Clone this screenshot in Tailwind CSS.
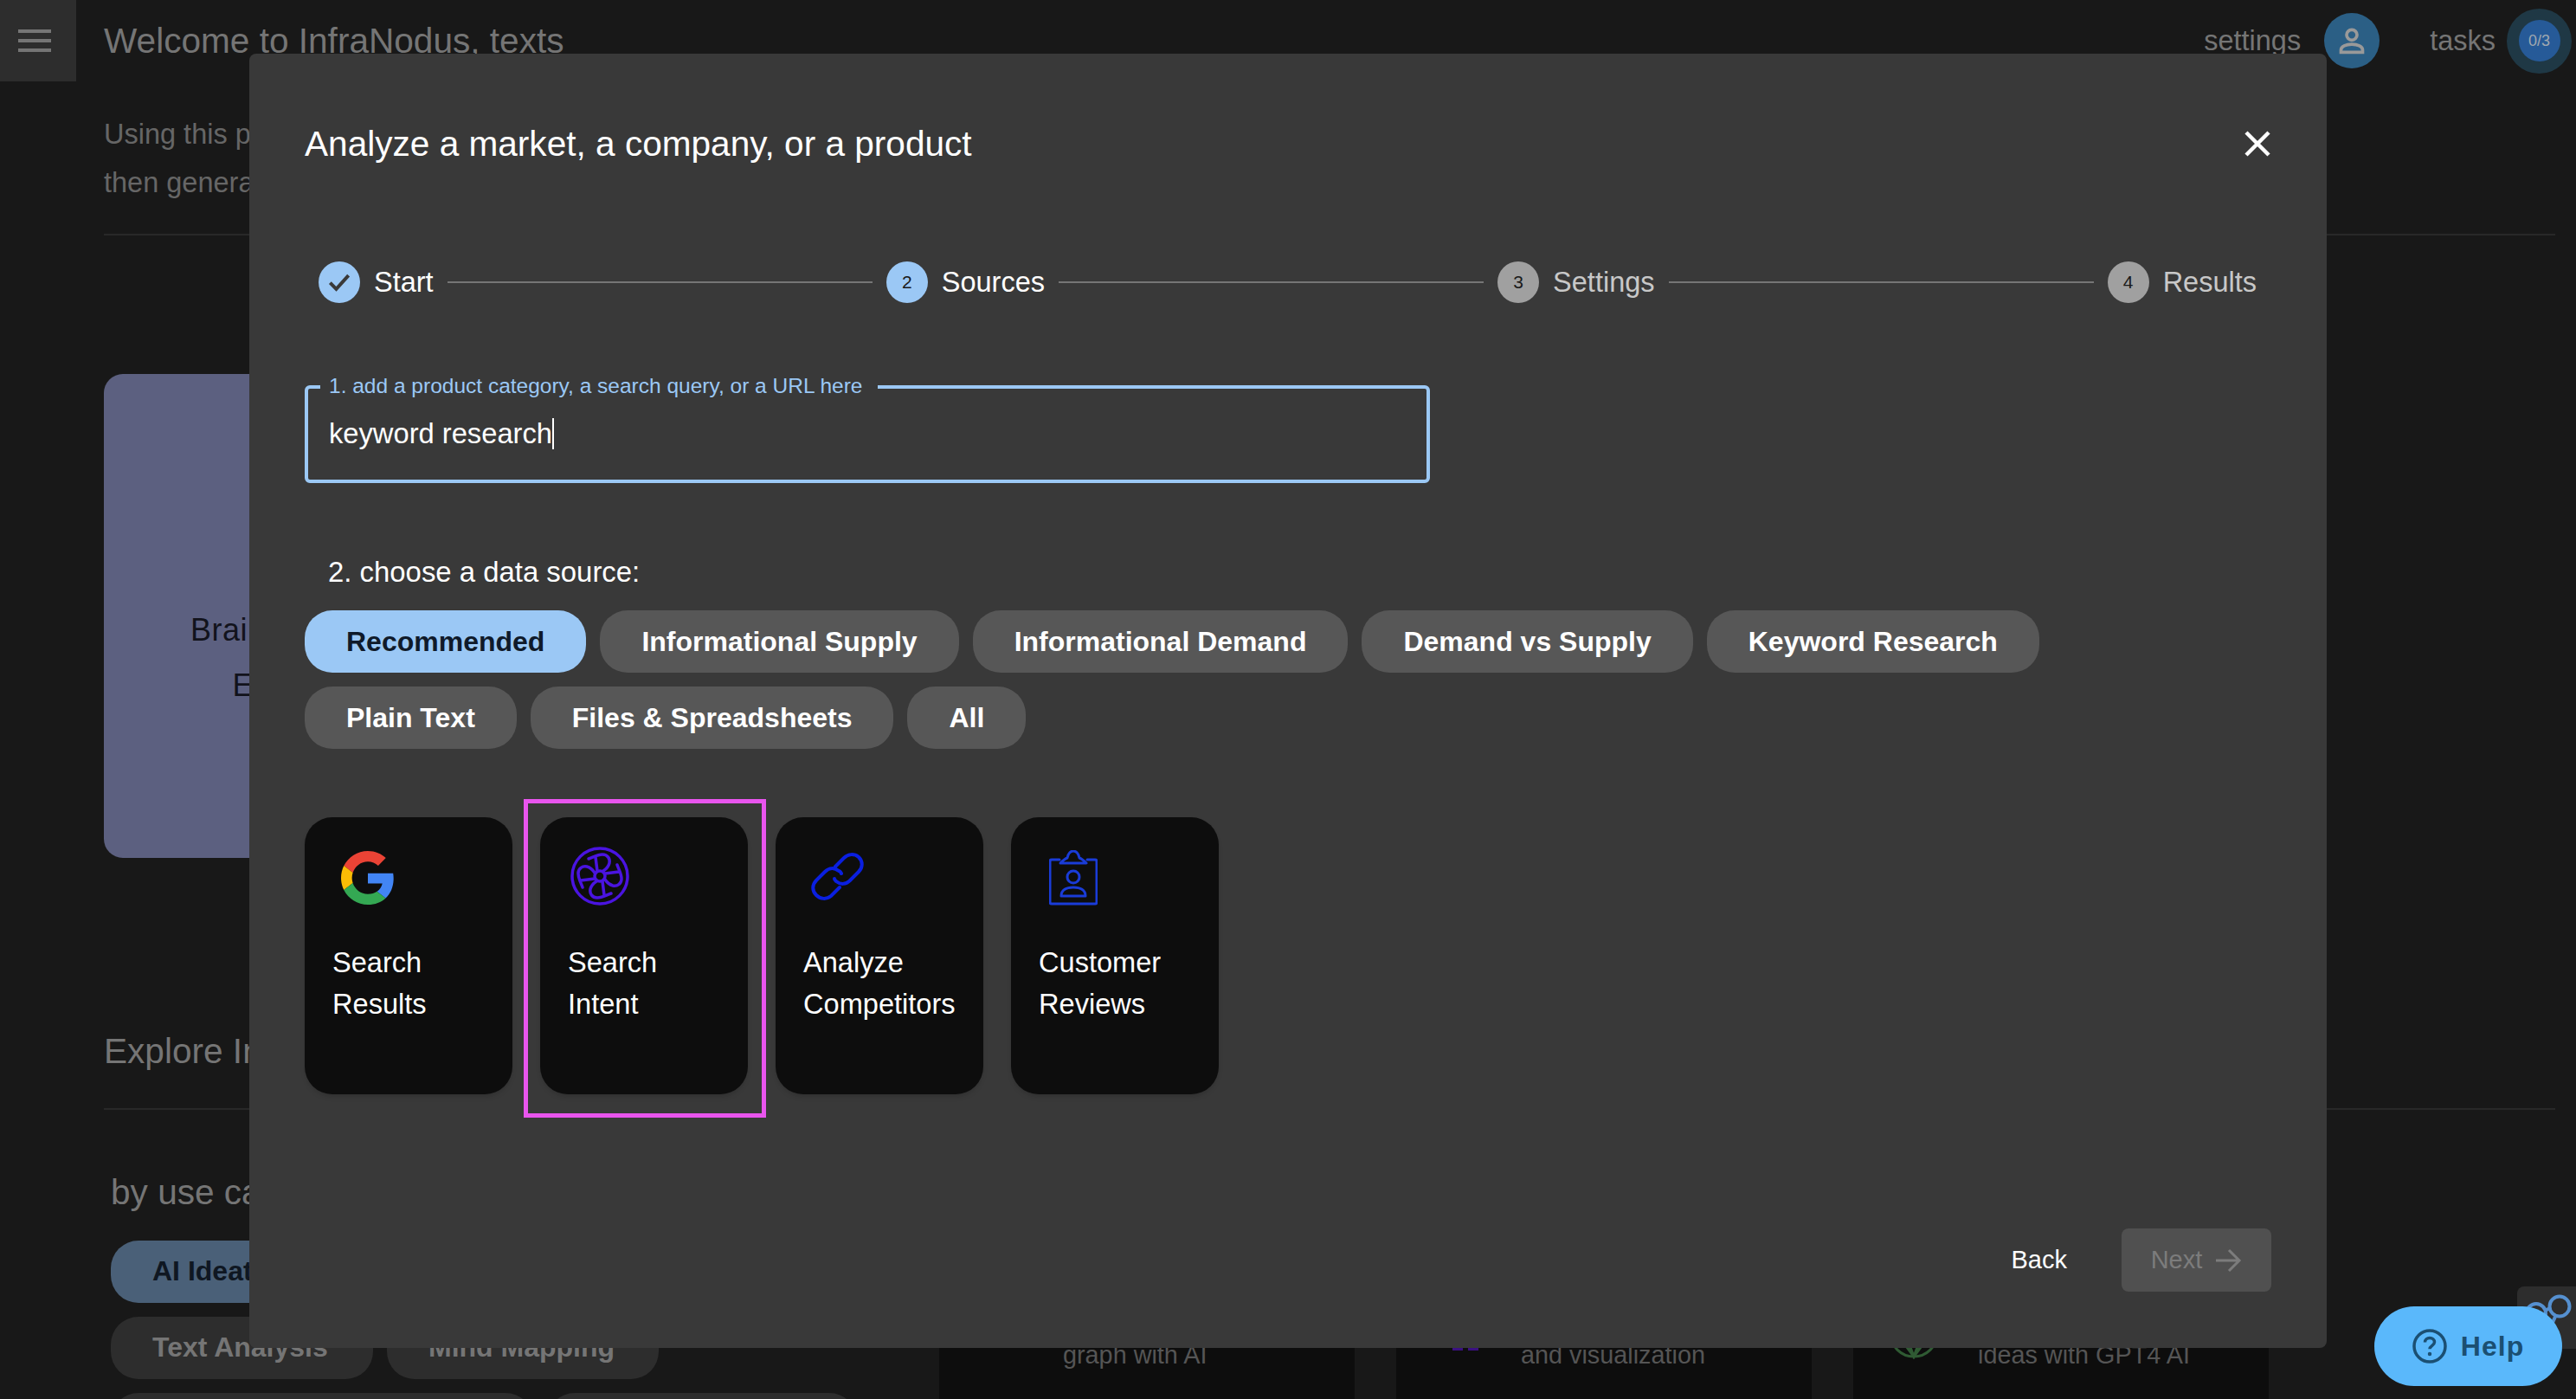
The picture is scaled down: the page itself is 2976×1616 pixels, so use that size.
<!DOCTYPE html>
<html lang="en">
<head>
    <meta charset="UTF-8">
    <title>InfraNodus</title>
    <script src="https://cdn.jsdelivr.net/npm/@tailwindcss/browser@4"></script>
</head>
<body class="bg-[#181818] font-['Liberation_Sans',Arial,sans-serif]">
<div class="relative w-[2976px] h-[1616px] overflow-hidden">

    <!-- page behind the dialog -->
    <header class="flex items-center h-[94px]">
        <div class="w-[88px] h-[94px] bg-[#2d2d2d] flex items-center pl-[20px]">
            <svg class="w-[40px] h-[40px]" viewBox="0 0 40 40" fill="#757575"><rect x="1" y="7" width="38" height="4"/><rect x="1" y="18" width="38" height="4"/><rect x="1" y="29" width="38" height="4"/></svg>
        </div>
        <h1 class="ml-[32px] text-[40.6px] text-[#757575]">Welcome to InfraNodus, texts</h1>
        <div class="ml-auto flex items-center">
            <span class="text-[32.5px] text-[#757575]">settings</span>
            <div class="ml-[27px] w-[64px] h-[64px] rounded-full bg-[#2b5f85] flex items-center justify-center">
                <svg class="w-[40px] h-[40px]" viewBox="0 0 24 24" fill="none" stroke="#999" stroke-width="2.2"><circle cx="12" cy="8" r="3.6"/><path d="M4.500 20v-1.500c0-2.500 3.500-4 7.500-4s7.500 1.500 7.500 4V20z"/></svg>
            </div>
            <span class="ml-[58px] text-[32.5px] text-[#757575]">tasks</span>
            <div class="ml-[13px] mr-[5px] w-[75px] h-[75px] rounded-full bg-[#1f3845] flex items-center justify-center">
                <div class="w-[48px] h-[48px] rounded-full bg-[#265a98] flex items-center justify-center text-[18px] text-[#a0a8b0]">0/3</div>
            </div>
        </div>
    </header>

    <main class="pl-[120px] pr-[24px]">
        <p class="mt-[33px] text-[32.5px] leading-[56px] text-[#666]">Using this p<br>then genera</p>
        <div class="mt-[31px] h-[2px] bg-[#282828]"></div>
        <div class="mt-[160px] w-[480px] h-[559px] rounded-[22px] bg-linear-to-r from-[#5c6080] from-75% to-[#4b5069] pt-[264px] text-[36px] tracking-[0.5px] leading-[64px] text-[#12131c] text-center">Brainstorm Ideas<br>Enrich Text</div>
        <h2 class="mt-[200px] text-[40.6px] leading-[46px] text-[#757575]">Explore InfraNodus</h2>
        <div class="mt-[43px] h-[2px] bg-[#282828]"></div>
        <h3 class="mt-[72px] ml-[8px] text-[40.6px] leading-[46px] text-[#757575]">by use case</h3>
    </main>

    <!-- chips and cards along the bottom of the page -->
    <div class="absolute left-[128px] top-[1433px] flex flex-col gap-[16px] text-[32px] font-bold">
        <div class="flex">
            <span class="h-[72px] rounded-[32px] bg-[#4a6078] px-[48px] leading-[70px] text-[#0f1722]">AI Ideation and Brainstorming</span>
        </div>
        <div class="flex gap-[16px]">
            <span class="h-[72px] w-[303px] rounded-[32px] bg-[#2d2d2d] pl-[48px] leading-[70px] text-[#757575]">Text Analysis</span>
            <span class="h-[72px] w-[314px] rounded-[32px] bg-[#2d2d2d] pl-[48px] leading-[70px] text-[#757575]">Mind Mapping</span>
        </div>
        <div class="flex gap-[16px]">
            <span class="h-[72px] w-[488px] rounded-[32px] bg-[#2d2d2d]"></span>
            <span class="h-[72px] w-[358px] rounded-[32px] bg-[#2d2d2d]"></span>
        </div>
    </div>
    <div class="absolute left-[1085px] top-[1400px] flex gap-[48px] text-[28.8px] text-[#555]">
        <div class="w-[480px] h-[240px] rounded-[24px] bg-[#0d0d0d] pt-[144px] pl-[143px]">graph with AI</div>
        <div class="relative w-[480px] h-[240px] rounded-[24px] bg-[#0d0d0d] pt-[144px] pl-[144px]">and visualization
            <svg class="absolute left-[63px] top-[140px] w-[34px] h-[20px]" viewBox="0 0 34 20" fill="#3a1080"><rect x="2" y="0" width="12" height="20"/><rect x="20" y="0" width="12" height="20"/></svg>
        </div>
        <div class="relative w-[480px] h-[240px] rounded-[24px] bg-[#0d0d0d] pt-[144px] pl-[144px]">ideas with GPT4 AI
            <svg class="absolute left-[40px] top-[110px] w-[60px] h-[60px]" viewBox="0 0 60 60" fill="none" stroke="#2f5a33" stroke-width="3"><circle cx="30" cy="30" r="27"/><path d="M10 30l20 27 20-27M20 30l10 27 10-27"/></svg>
        </div>
    </div>

    <!-- small graph button under the help pill -->
    <div class="absolute left-[2908px] top-[1486px] w-[68px] h-[72px] rounded-tl-[8px] bg-[#2d2d2d]">
        <svg class="w-[68px] h-[72px]" viewBox="0 0 68 72" fill="none" stroke="#5590d0" stroke-width="4"><circle cx="22" cy="31" r="11"/><circle cx="49" cy="23" r="11.500"/><path d="M32 28l6-3M44 35l-8 18"/></svg>
    </div>

    <!-- help pill -->
    <div class="absolute left-[2743px] top-[1509px] w-[217px] h-[92px] rounded-[46px] bg-[#5ab8fb] flex items-center justify-center gap-[16px] text-[#1b4f72]">
        <svg class="w-[40px] h-[40px]" viewBox="0 0 40 40" fill="none" stroke="currentColor" stroke-width="3.500"><circle cx="20" cy="20" r="18"/><path d="M14.500 15.500c0-3 2.500-5 5.500-5s5.500 2 5.500 4.800c0 4-5.500 4-5.500 8"/><circle cx="20" cy="29" r="1" stroke-width="2.500"/></svg>
        <span class="text-[32px] font-bold tracking-[1px]">Help</span>
    </div>

    <!-- dialog -->
    <div class="absolute left-[288px] top-[62px] w-[2400px] h-[1495px] rounded-[8px] bg-[#393939] text-white pl-[64px] pr-[64px]">
        <div class="flex items-center justify-between h-[210px] pb-[2px]">
            <h2 class="text-[40.6px]">Analyze a market, a company, or a product</h2>
            <svg class="w-[40px] h-[40px] mr-[-4px]" viewBox="0 0 40 40" stroke="#fff" stroke-width="4.500"><path d="M7 7l26 26M33 7L7 33"/></svg>
        </div>

        <!-- stepper -->
        <div class="flex items-center h-[48px] mt-[30px] pl-[16px] pr-[17px] text-[32.5px]">
            <span class="w-[48px] h-[48px] rounded-full bg-[#9bc8f5] flex items-center justify-center">
                <svg class="w-[34px] h-[34px]" viewBox="0 0 24 24" fill="none" stroke="#393939" stroke-width="2.800"><path d="M4.500 12.500l5 5L19.500 6.500"/></svg>
            </span>
            <span class="ml-[16px]">Start</span>
            <span class="flex-1 mx-[16px] h-[2px] bg-[#757575]"></span>
            <span class="w-[48px] h-[48px] rounded-full bg-[#9bc8f5] flex items-center justify-center text-[21px] text-[#1a1a1a]">2</span>
            <span class="ml-[16px]">Sources</span>
            <span class="flex-1 mx-[16px] h-[2px] bg-[#757575]"></span>
            <span class="w-[48px] h-[48px] rounded-full bg-[#a0a0a0] flex items-center justify-center text-[21px] text-[#1a1a1a]">3</span>
            <span class="ml-[16px] text-[#c8c8c8]">Settings</span>
            <span class="flex-1 mx-[16px] h-[2px] bg-[#757575]"></span>
            <span class="w-[48px] h-[48px] rounded-full bg-[#a0a0a0] flex items-center justify-center text-[21px] text-[#1a1a1a]">4</span>
            <span class="ml-[16px] text-[#c8c8c8]">Results</span>
        </div>

        <!-- input -->
        <div class="relative mt-[95px] w-[1300px] h-[113px] rounded-[6px] border-[4px] border-[#9bc8f5] flex items-center pl-[24px] pb-[2px] text-[32.7px]">
            <span class="absolute left-[14px] top-[-17px] h-[28px] pl-[10px] pr-[18px] bg-[#393939] text-[24.5px] leading-[28px] text-[#9bc8f5]">1. add a product category, a search query, or a URL here</span>
            <span>keyword research</span><span class="w-[2px] h-[36px] bg-white"></span>
        </div>

        <p class="mt-[80px] ml-[27px] text-[32.9px] leading-[46px]">2. choose a data source:</p>

        <!-- source filter chips -->
        <div class="mt-[21px] w-[2100px] flex flex-wrap gap-[16px] text-[32px] font-bold">
            <span class="h-[72px] rounded-[32px] px-[48px] leading-[72px] bg-[#9bc8f5] text-[#0f1a2a]">Recommended</span>
            <span class="h-[72px] rounded-[32px] px-[48px] leading-[72px] bg-[#575757]">Informational Supply</span>
            <span class="h-[72px] rounded-[32px] px-[48px] leading-[72px] bg-[#575757]">Informational Demand</span>
            <span class="h-[72px] rounded-[32px] px-[48px] leading-[72px] bg-[#575757]">Demand vs Supply</span>
            <span class="h-[72px] rounded-[32px] px-[48px] leading-[72px] bg-[#575757]">Keyword Research</span>
            <span class="h-[72px] rounded-[32px] px-[48px] leading-[72px] bg-[#575757]">Plain Text</span>
            <span class="h-[72px] rounded-[32px] px-[48px] leading-[72px] bg-[#575757]">Files &amp; Spreadsheets</span>
            <span class="h-[72px] rounded-[32px] px-[48px] leading-[72px] bg-[#575757]">All</span>
        </div>

        <!-- source cards -->
        <div class="mt-[79px] flex gap-[32px] text-[32.6px] leading-[48px]">
            <div class="w-[240px] h-[320px] rounded-[32px] bg-[#0d0d0d] pl-[32px] shadow-md">
                <svg class="mt-[38px] ml-[10px] w-[62px] h-[64px]" viewBox="0 0 48 48">
                    <path fill="#EA4335" d="M24 9.500c3.540 0 6.710 1.220 9.210 3.600l6.850-6.850C35.900 2.380 30.470 0 24 0 14.620 0 6.510 5.380 2.560 13.220l7.980 6.190C12.430 13.720 17.740 9.500 24 9.500z"/>
                    <path fill="#4285F4" d="M46.980 24.550c0-1.570-.15-3.090-.38-4.550H24v9.020h12.940c-.58 2.960-2.260 5.480-4.780 7.180l7.730 6c4.510-4.180 7.090-10.360 7.090-17.650z"/>
                    <path fill="#FBBC05" d="M10.530 28.590c-.48-1.450-.76-2.990-.76-4.590s.27-3.140.76-4.590l-7.980-6.190C.92 16.460 0 20.120 0 24c0 3.880.92 7.540 2.560 10.780l7.970-6.190z"/>
                    <path fill="#34A853" d="M24 48c6.480 0 11.930-2.130 15.890-5.810l-7.730-6c-2.150 1.450-4.920 2.300-8.160 2.300-6.260 0-11.570-4.220-13.470-9.910l-7.980 6.190C6.510 42.620 14.620 48 24 48z"/>
                </svg>
                <p class="mt-[42px]">Search<br>Results</p>
            </div>
            <div class="relative w-[240px] h-[320px] rounded-[32px] bg-[#0d0d0d] pl-[32px] shadow-md">
                <span class="absolute left-[-19px] top-[-21px] w-[280px] h-[368px] border-[5px] border-[#e955ee]"></span>
                <svg class="mt-[34px] ml-[3px] w-[68px] h-[68px]" viewBox="0 0 68 68" fill="none" stroke="#4a14e0" stroke-width="3.500" stroke-linecap="round">
                    <circle cx="34" cy="34" r="32"/>
                    <circle cx="34" cy="34" r="6"/>
                    <path d="M21 14c6-2 10-5 16-5s9 5 8 10c-1 4-4 7-7 9M29 12l2 16"/>
                    <path transform="rotate(90 34 34)" d="M21 14c6-2 10-5 16-5s9 5 8 10c-1 4-4 7-7 9M29 12l2 16"/>
                    <path transform="rotate(180 34 34)" d="M21 14c6-2 10-5 16-5s9 5 8 10c-1 4-4 7-7 9M29 12l2 16"/>
                    <path transform="rotate(270 34 34)" d="M21 14c6-2 10-5 16-5s9 5 8 10c-1 4-4 7-7 9M29 12l2 16"/>
                </svg>
                <p class="mt-[42px]">Search<br>Intent</p>
            </div>
            <div class="w-[240px] h-[320px] rounded-[32px] bg-[#0d0d0d] pl-[32px] shadow-md">
                <svg class="mt-[40px] ml-[9px] w-[62px] h-[62px]" viewBox="0 0 62 62" fill="none" stroke="#0a1fe0" stroke-width="4" stroke-linecap="round">
                    <path d="M28 17L38 7c5-5 12-5 17-1 5 5 5 12 0 17L45 33c-5 5-11 5-16 1-1-1-2-2-2-3"/>
                    <path d="M35 25c-1-2-2-3-3-3-5-4-11-4-16 1L6 33c-5 5-5 12 0 17 5 5 12 5 17 1L33 41"/>
                </svg>
                <p class="mt-[42px]">Analyze<br>Competitors</p>
            </div>
            <div class="w-[240px] h-[320px] rounded-[32px] bg-[#0d0d0d] pl-[32px] shadow-md">
                <svg class="mt-[38px] ml-[12px] w-[56px] h-[64px]" viewBox="0 0 56 64" fill="none" stroke="#1a3cd8" stroke-width="3" stroke-linecap="round" stroke-linejoin="round">
                    <path d="M12 11H3a2 2 0 0 0-2 2v47a2 2 0 0 0 2 2h50a2 2 0 0 0 2-2V13a2 2 0 0 0-2-2h-9"/>
                    <path d="M13 15c3-3 5-5 8-6 1-5 4-8 7-8s6 3 7 8c3 1 5 3 8 6z"/>
                    <circle cx="28" cy="31" r="7"/>
                    <path d="M14 53c0-7 6-10 14-10s14 3 14 10z"/>
                </svg>
                <p class="mt-[42px]">Customer<br>Reviews</p>
            </div>
        </div>

        <!-- dialog actions -->
        <div class="mt-[155px] flex items-center justify-end text-[29px]">
            <span class="mr-[63px]">Back</span>
            <span class="w-[173px] h-[73px] rounded-[8px] bg-[#505050] flex items-center justify-center gap-[14px] text-[#7c7c7c]">
                Next
                <svg class="w-[32px] h-[32px]" viewBox="0 0 32 32" fill="none" stroke="currentColor" stroke-width="3"><path d="M2 16h27M17 4l12 12-12 12"/></svg>
            </span>
        </div>
    </div>
</div>
</body>
</html>
